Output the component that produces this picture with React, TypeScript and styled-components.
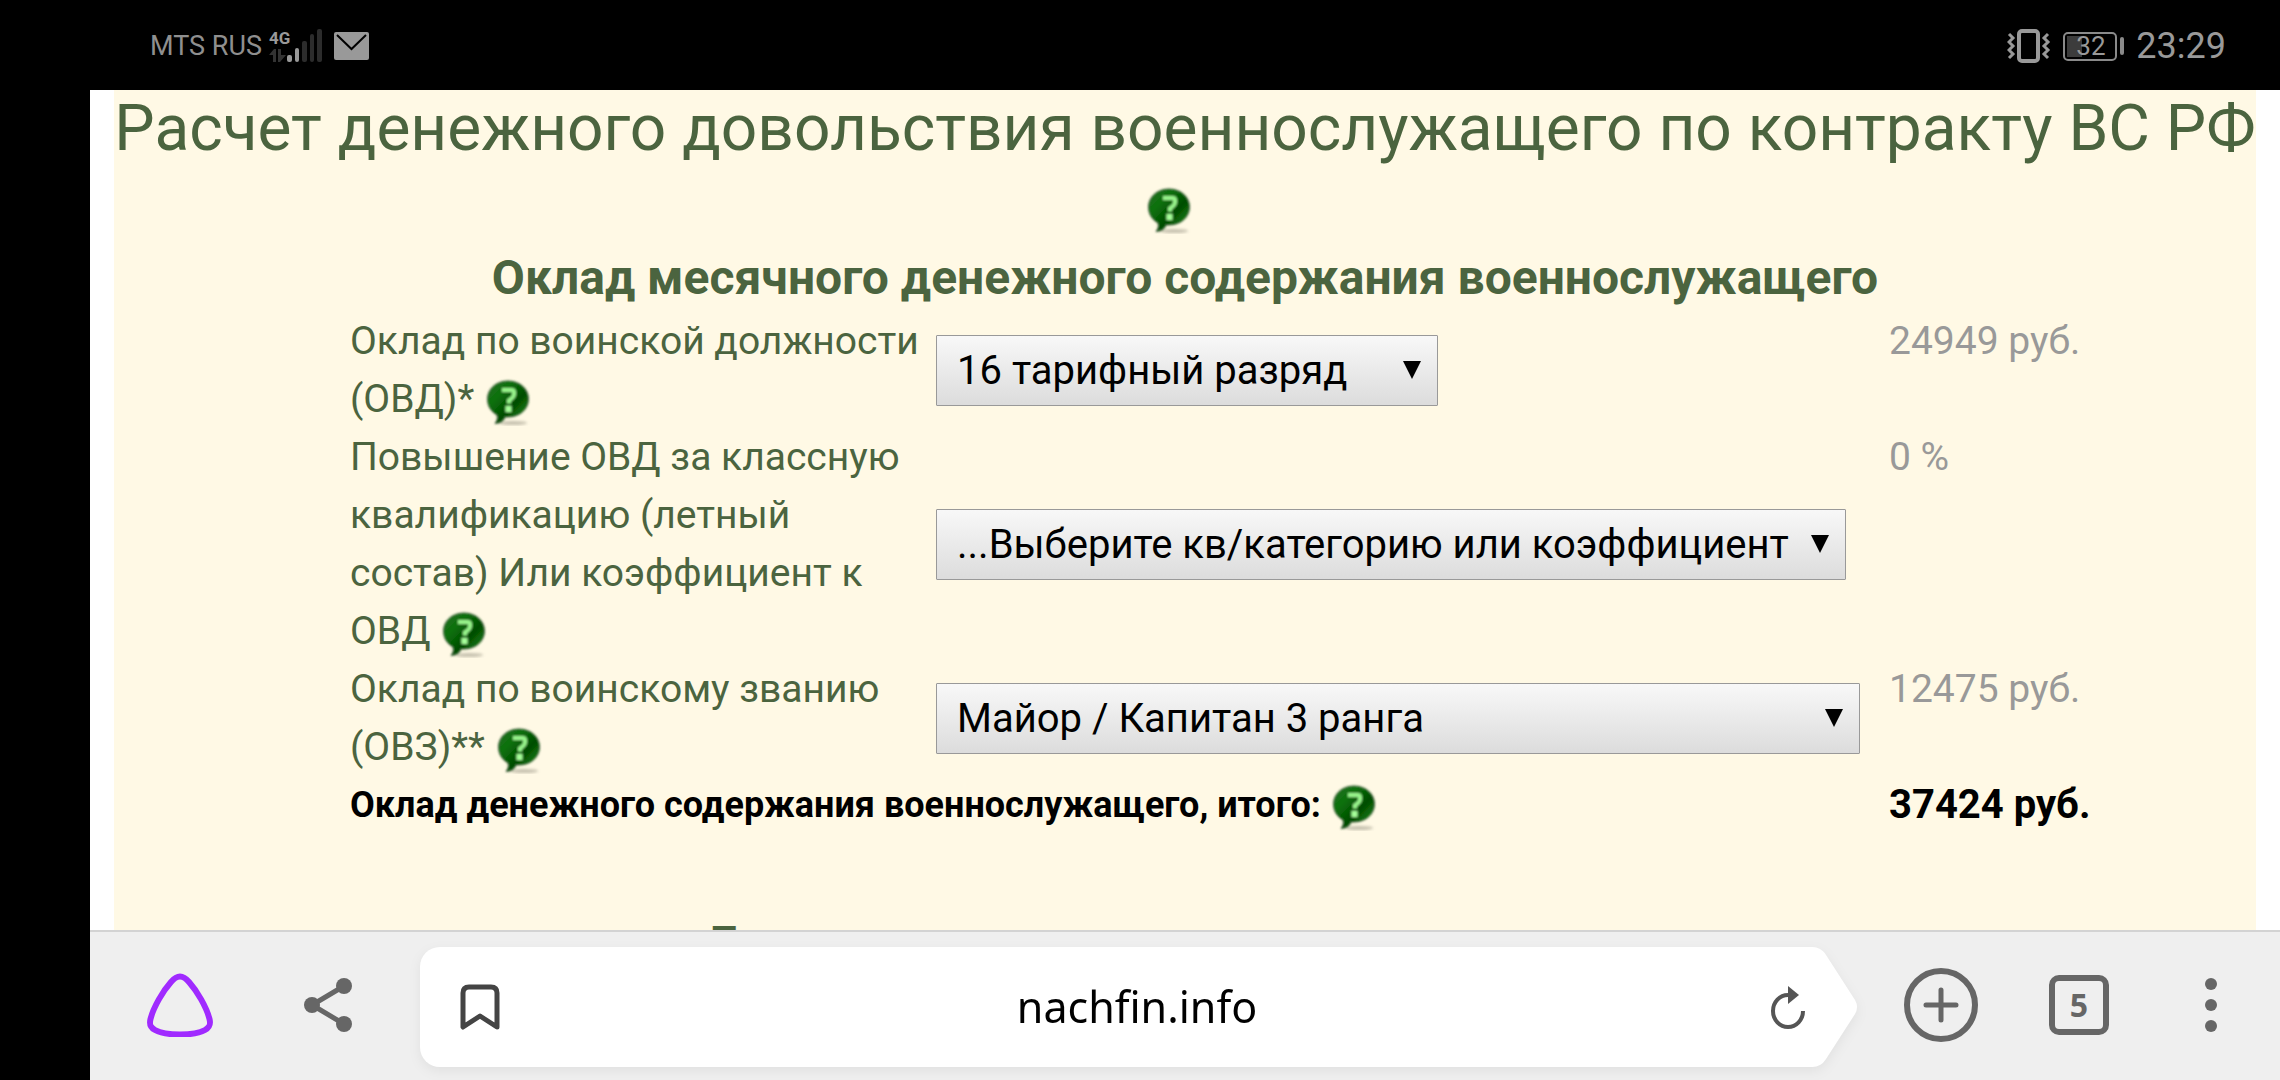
import React from 'react';
import styled, { createGlobalStyle, css } from 'styled-components';

const Global = createGlobalStyle`
  *, *::before, *::after { box-sizing: border-box; }
  body { margin: 0; background: #000; font-family: Roboto, "Noto Sans", sans-serif; }
`;

const Screen = styled.div`
  height: 100vh;
  display: flex;
  flex-direction: column;
  overflow: hidden;
  background: #000;
`;

const StatusBar = styled.header`
  flex: none;
  height: 90px;
  padding: 2px 54px 0 150px;
  display: flex;
  align-items: center;
  justify-content: space-between;
  color: #999;
`;

const StatusGroup = styled.div<{ $gap: number }>`
  display: flex;
  align-items: center;
  gap: ${(p) => p.$gap}px;
`;

const Carrier = styled.span`
  font-size: 27px;
  line-height: 32px;
  color: #8f8f8f;
`;

const Network = styled.div`
  display: grid;
  width: 54px;
  height: 36px;
  > * { grid-area: 1 / 1; }
`;

const NetworkType = styled.span`
  font-size: 17px;
  line-height: 20px;
  font-weight: 700;
`;

const Clock = styled.time`
  font-size: 36px;
  line-height: 44px;
`;

const Battery = styled.div`
  display: flex;
  align-items: center;
  gap: 3px;
`;

const BatteryCase = styled.div`
  width: 54px;
  height: 29px;
  padding-left: 11px;
  border: 2px solid #8a8a8a;
  border-radius: 5px;
  background: linear-gradient(#3c3c3c, #3c3c3c) 2px 2px / 15px 21px no-repeat;
  font-size: 26px;
  line-height: 25px;
`;

const BatteryTip = styled.div`
  width: 4px;
  height: 18px;
  border-radius: 2px;
  background: #8a8a8a;
`;

const Browser = styled.div`
  flex: 1;
  min-height: 0;
  margin-left: 90px;
  display: flex;
  flex-direction: column;
  background: #fff;
`;

const Viewport = styled.main`
  flex: 1;
  min-height: 0;
  overflow: hidden;
  padding: 0 24px;
`;

const Sheet = styled.div`
  min-height: 100%;
  background: #fff9e5;
  color: #4b643f;
`;

const Title = styled.h1`
  margin: 0;
  font-size: 64px;
  line-height: 77px;
  font-weight: 400;
  text-align: center;
`;

const SectionTitle = styled.h2`
  margin: 0;
  font-size: 48px;
  line-height: 68px;
  font-weight: 700;
  text-align: center;
`;

const FormArea = styled.form`
  padding: 0 132px 76px 236px;
`;

const PayTable = styled.table`
  width: 100%;
  table-layout: fixed;
  border-collapse: collapse;
  font-size: 39px;
  line-height: 58px;
`;

const LabelCol = styled.col`
  width: 586px;
`;

const ValueCol = styled.col`
  width: 235px;
`;

const cell = css`
  padding: 0;
  text-align: left;
  font-weight: 400;
  vertical-align: top;
`;

const LabelCell = styled.th`
  ${cell}
  padding-right: 12px;
`;

const ControlCell = styled.td`
  ${cell}
  vertical-align: middle;
`;

const ValueCell = styled.td`
  ${cell}
  color: #999;
`;

const TotalLabel = styled.th`
  ${cell}
  font-size: 36px;
  font-weight: 700;
  color: #000;
`;

const TotalValue = styled.td`
  ${cell}
  font-size: 40px;
  font-weight: 700;
  color: #000;
`;

const SelectBox = styled.div<{ $width: number }>`
  position: relative;
  width: ${(p) => p.$width}px;
  height: 71px;
`;

const Select = styled.select`
  appearance: none;
  display: block;
  width: 100%;
  height: 100%;
  padding: 0 52px 0 20px;
  border: 1px solid #999;
  border-radius: 1px;
  background: linear-gradient(#f8f8f8, #dcdcdc);
  color: #000;
  font-family: inherit;
  font-size: 40px;
`;

const Arrow = styled.svg`
  position: absolute;
  right: 17px;
  top: 26px;
  width: 18px;
  height: 18px;
  pointer-events: none;
`;

const HelpButton = styled.button`
  display: inline-block;
  width: 48px;
  height: 48px;
  padding: 0;
  border: 0;
  background: none;
  vertical-align: middle;
  line-height: 0;
`;

const Toolbar = styled.nav`
  flex: none;
  height: 150px;
  display: flex;
  align-items: center;
  padding: 0 23px 2px 50px;
  border-top: 2px solid #d3d3d3;
  background: #efefef;
`;

const LeftTools = styled.div`
  flex: none;
  display: flex;
  gap: 58px;
`;

const ToolButton = styled.button<{ $width: number }>`
  flex: none;
  width: ${(p) => p.$width}px;
  height: 80px;
  padding: 0;
  border: 0;
  background: none;
  display: flex;
  align-items: center;
  justify-content: center;
`;

const AddressBar = styled.div`
  flex: 1;
  height: 120px;
  margin: 4px 31px 0 42px;
  display: flex;
  filter: drop-shadow(0 4px 6px rgba(0, 0, 0, 0.06));
`;

const AddressBody = styled.div`
  flex: 1;
  min-width: 0;
  display: flex;
  align-items: center;
  background: #fff;
  border-radius: 20px 0 0 20px;
`;

const AddressTip = styled.svg`
  flex: none;
  display: block;
  width: 50px;
  height: 120px;
`;

const AddressInput = styled.input`
  flex: 1;
  min-width: 0;
  padding: 0 34px 0 0;
  border: 0;
  outline: 0;
  background: none;
  color: #000;
  font-family: "Noto Sans", sans-serif;
  font-size: 43px;
  line-height: 58px;
  text-align: center;
`;

const TabCount = styled.span`
  width: 60px;
  height: 60px;
  border: 6px solid #666;
  border-radius: 10px;
  color: #666;
  font-family: "Noto Sans", sans-serif;
  font-size: 32px;
  line-height: 48px;
  font-weight: 700;
  text-align: center;
`;

function Help({ topic }: { topic: string }) {
  return (
    <HelpButton type="button" aria-label={topic}>
      <svg width="48" height="48" viewBox="0 0 48 48">
        <defs>
          <linearGradient id="bubble" x1="0" y1="0" x2="1" y2="1">
            <stop offset="0" stopColor="#2c6a2a" />
            <stop offset="0.3" stopColor="#0b720b" />
            <stop offset="0.6" stopColor="#004c00" />
            <stop offset="0.85" stopColor="#1c7d12" />
            <stop offset="1" stopColor="#2d6428" />
          </linearGradient>
          <filter id="soft" x="-20%" y="-20%" width="140%" height="140%">
            <feGaussianBlur stdDeviation="0.8" />
          </filter>
          <filter id="shade" x="-20%" y="-100%" width="140%" height="300%">
            <feGaussianBlur stdDeviation="1.4" />
          </filter>
        </defs>
        <ellipse cx="29" cy="45" rx="14" ry="2" fill="#8c8878" opacity="0.5" filter="url(#shade)" />
        <g filter="url(#soft)">
          <path
            d="M24 3C36 3 44.500 11 44.500 21S36 39 24 39H21C20 42 18 45 11 45.500C13 43 14 40.500 13 37C7 33.500 3.500 28 3.500 21C3.500 11 12 3 24 3Z"
            fill="url(#bubble)"
            stroke="#3a5a3a"
            strokeWidth="1"
          />
          <path d="M18 12H27.500Q30 12 30 14V16.500Q30 18.500 28 20L25 22.500V25.500" fill="none" stroke="#98f58c" strokeWidth="4" />
          <rect x="21.500" y="28" width="6" height="6" fill="#a6ff9a" />
        </g>
      </svg>
    </HelpButton>
  );
}

interface PickerProps {
  id: string;
  width: number;
  options: string[];
}

function Picker({ id, width, options }: PickerProps) {
  return (
    <SelectBox $width={width}>
      <Select id={id}>
        {options.map((o) => (
          <option key={o}>{o}</option>
        ))}
      </Select>
      <Arrow viewBox="0 0 18 18">
        <path d="M0 0H18L9 18Z" fill="#000" />
      </Arrow>
    </SelectBox>
  );
}

const rows = [
  {
    id: 'position',
    label: 'Оклад по воинской должности (ОВД)*',
    width: 502,
    options: ['16 тарифный разряд'],
    value: '24949 руб.',
  },
  {
    id: 'class',
    label: 'Повышение ОВД за классную квалификацию (летный состав) Или коэффициент к ОВД',
    width: 910,
    options: ['...Выберите кв/категорию или коэффициент'],
    value: '0 %',
  },
  {
    id: 'rank',
    label: 'Оклад по воинскому званию (ОВЗ)**',
    width: 924,
    options: ['Майор / Капитан 3 ранга'],
    value: '12475 руб.',
  },
];

function Signal() {
  return (
    <Network>
      <svg width="54" height="36" viewBox="0 0 54 36">
        <path d="M0 27L5 21H7V34H4V27Z M9 21H12V27H17L11 34H9Z" fill="#333" />
        <rect x="18" y="27" width="5" height="7" rx="2" fill="#999" />
        <rect x="26" y="20" width="4" height="14" rx="2" fill="#999" />
        <rect x="33" y="13" width="5" height="21" rx="2" fill="#2c2c2c" />
        <rect x="41" y="6" width="4" height="28" rx="2" fill="#2c2c2c" />
        <rect x="48" y="1" width="5" height="33" rx="2" fill="#2c2c2c" />
      </svg>
      <NetworkType>4G</NetworkType>
    </Network>
  );
}

export default function App() {
  return (
    <Screen>
      <Global />
      <StatusBar>
        <StatusGroup $gap={7}>
          <Carrier>MTS RUS</Carrier>
          <Signal />
          <svg width="42" height="28" viewBox="0 0 42 28">
            <rect x="4" y="0" width="35" height="28" rx="2" fill="#999" />
            <path d="M7 3L21.500 17L36 3" fill="none" stroke="#000" strokeWidth="2" />
          </svg>
        </StatusGroup>
        <StatusGroup $gap={12}>
          <svg width="44" height="34" viewBox="0 0 44 34">
            <rect x="12" y="2" width="19" height="30" rx="3" fill="none" stroke="#999" strokeWidth="4" />
            <path d="M2 5L6 9L2 13L6 17L2 21L6 25L2 29M41 5L37 9L41 13L37 17L41 21L37 25L41 29" fill="none" stroke="#999" strokeWidth="3" />
          </svg>
          <Battery>
            <BatteryCase>32</BatteryCase>
            <BatteryTip />
          </Battery>
          <Clock>23:29</Clock>
        </StatusGroup>
      </StatusBar>
      <Browser>
        <Viewport>
          <Sheet>
            <Title>
              Расчет денежного довольствия военнослужащего по контракту ВС РФ{' '}
              <Help topic="О расчете" />
              {'\u00a0\u00a0'}
            </Title>
            <SectionTitle>Оклад месячного денежного содержания военнослужащего</SectionTitle>
            <FormArea>
              <PayTable>
                <colgroup>
                  <LabelCol />
                  <col />
                  <ValueCol />
                </colgroup>
                <tbody>
                  {rows.map((r) => (
                    <tr key={r.id}>
                      <LabelCell scope="row">
                        <label htmlFor={r.id}>{r.label}</label> <Help topic="Подсказка" />
                      </LabelCell>
                      <ControlCell>
                        <Picker id={r.id} width={r.width} options={r.options} />
                      </ControlCell>
                      <ValueCell>{r.value}</ValueCell>
                    </tr>
                  ))}
                  <tr>
                    <TotalLabel scope="row" colSpan={2}>
                      Оклад денежного содержания военнослужащего, итого: <Help topic="Подсказка" />
                    </TotalLabel>
                    <TotalValue>37424 руб.</TotalValue>
                  </tr>
                </tbody>
              </PayTable>
            </FormArea>
            <SectionTitle>Ежемесячные дополнительные выплаты</SectionTitle>
          </Sheet>
        </Viewport>
        <Toolbar>
          <LeftTools>
            <ToolButton $width={80} type="button" aria-label="Алиса">
              <svg width="66" height="64" viewBox="0 0 66 64">
                <path
                  d="M33 3.500C37 3.500 39 5.500 42 9C50 18 59.500 34 62.500 46C64 52 62.500 54.500 58 57C51 61 42 61.500 33 61.500S15 61 8 57C3.500 54.500 2 52 3.500 46C6.500 34 16 18 24 9C27 5.500 29 3.500 33 3.500Z"
                  fill="none"
                  stroke="#a02aff"
                  strokeWidth="6"
                />
              </svg>
            </ToolButton>
            <ToolButton $width={100} type="button" aria-label="Поделиться">
              <svg width="50" height="54" viewBox="0 0 50 54">
                <path d="M41 8L9 27L41 46" fill="none" stroke="#666" strokeWidth="5" />
                <circle cx="9" cy="27" r="8" fill="#666" />
                <circle cx="41" cy="8" r="8" fill="#666" />
                <circle cx="41" cy="46" r="8" fill="#666" />
              </svg>
            </ToolButton>
          </LeftTools>
          <AddressBar>
            <AddressBody>
              <ToolButton $width={120} type="button" aria-label="Закладка">
                <svg width="40" height="46" viewBox="0 0 40 46">
                  <path d="M3 43V9Q3 3 9 3H31Q37 3 37 9V43L20 32Z" fill="none" stroke="#444" strokeWidth="5" strokeLinejoin="round" />
                </svg>
              </ToolButton>
              <AddressInput aria-label="Адрес" defaultValue="nachfin.info" />
              <ToolButton $width={40} type="button" aria-label="Обновить">
                <svg width="36" height="44" viewBox="0 0 36 44">
                  <path d="M33 26A15 16 0 1 1 18 10" fill="none" stroke="#555" strokeWidth="4" />
                  <path d="M18 1L29 10L18 19Z" fill="#555" />
                </svg>
              </ToolButton>
            </AddressBody>
            <AddressTip viewBox="0 0 50 120">
              <path d="M0 0H4Q13 0 18 8L47 53Q51 60 47 67L18 112Q13 120 4 120H0Z" fill="#fff" />
            </AddressTip>
          </AddressBar>
          <ToolButton $width={104} type="button" aria-label="Новая вкладка">
            <svg width="76" height="76" viewBox="0 0 76 76">
              <circle cx="38" cy="38" r="34" fill="none" stroke="#666" strokeWidth="6" />
              <path d="M38 23V53M23 38H53" stroke="#666" strokeWidth="5" strokeLinecap="round" />
            </svg>
          </ToolButton>
          <ToolButton $width={172} type="button" aria-label="Вкладки">
            <TabCount>5</TabCount>
          </ToolButton>
          <ToolButton $width={92} type="button" aria-label="Меню">
            <svg width="12" height="54" viewBox="0 0 12 54">
              <circle cx="6" cy="6" r="6" fill="#666" />
              <circle cx="6" cy="27" r="6" fill="#666" />
              <circle cx="6" cy="48" r="6" fill="#666" />
            </svg>
          </ToolButton>
        </Toolbar>
      </Browser>
    </Screen>
  );
}
